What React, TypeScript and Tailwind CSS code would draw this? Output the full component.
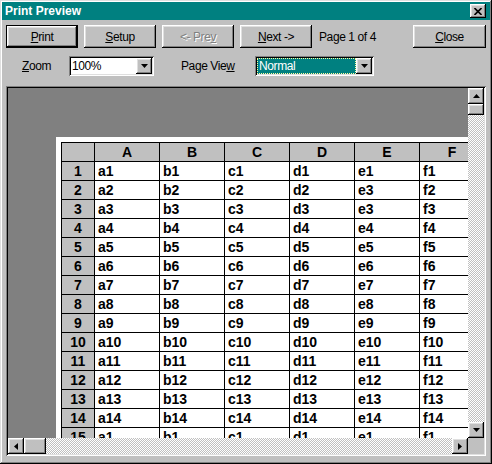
import React from 'react';

const raised =
  'bg-[#c0c0c0] shadow-[inset_-1px_-1px_0_#000,inset_1px_1px_0_#fff,inset_-2px_-2px_0_#808080,inset_2px_2px_0_#dfdfdf]';
const sunken =
  'shadow-[inset_1px_1px_0_#808080,inset_-1px_-1px_0_#fff,inset_2px_2px_0_#000,inset_-2px_-2px_0_#dfdfdf]';
const dither =
  'bg-[repeating-conic-gradient(#c0c0c0_0%_25%,#ffffff_0%_50%)] bg-[length:2px_2px]';

type Dir = 'up' | 'down' | 'left' | 'right';

const Arrow = ({ dir }: { dir: Dir }) => {
  const v = dir === 'up' || dir === 'down';
  const pts = {
    up: '3.5,0 7,4 0,4',
    down: '0,0 7,0 3.5,4',
    left: '4,0 4,7 0,3.5',
    right: '0,0 4,3.5 0,7',
  }[dir];
  return (
    <svg width={v ? 7 : 4} height={v ? 4 : 7} viewBox={v ? '0 0 7 4' : '0 0 4 7'}>
      <polygon points={pts} fill="#000" />
    </svg>
  );
};

const ScrollBtn = ({ dir }: { dir: Dir }) => (
  <div className={`${raised} w-[16px] h-[16px] shrink-0 flex items-center justify-center`}>
    <Arrow dir={dir} />
  </div>
);

const Btn = ({ children, isDefault, disabled, className = '' }: { children: React.ReactNode; isDefault?: boolean; disabled?: boolean; className?: string }) => (
  <div className={`h-[23px] ${isDefault ? 'border border-black' : ''} ${className}`}>
    <div
      className={`${raised} h-full w-full flex items-center justify-center ${
        disabled ? 'text-[#808080] [text-shadow:1px_1px_0_#fff]' : 'text-black'
      }`}
    >
      {children}
    </div>
  </div>
);

const Combo = ({ width, children }: { width: string; children: React.ReactNode }) => (
  <div className={`${sunken} ${width} h-[20px] bg-white p-[2px] flex items-stretch`}>
    <div className="flex-1 flex items-center min-w-0">{children}</div>
    <div className={`${raised} w-[16px] h-[16px] flex items-center justify-center`}>
      <Arrow dir="down" />
    </div>
  </div>
);

const cols = ['A', 'B', 'C', 'D', 'E', 'F'];
const rows = Array.from({ length: 15 }, (_, i) => {
  const n = i + 1;
  if (n === 15) return { label: 15, cells: cols.map((c) => `${c.toLowerCase()}1`) };
  return {
    label: n,
    cells: cols.map((c) => (n === 2 && c === 'E' ? 'e3' : `${c.toLowerCase()}${n}`)),
  };
});

export default function App() {
  return (
    <div
      className="w-[492px] h-[464px] bg-[#c0c0c0] p-[2px] flex flex-col text-[12px] tracking-[-0.4px] shadow-[inset_-1px_-1px_0_#000,inset_1px_1px_0_#dfdfdf,inset_-2px_-2px_0_#808080,inset_2px_2px_0_#fff]"
      style={{ fontFamily: '"Liberation Sans", Arial, sans-serif' }}
    >
      {/* title bar */}
      <div className="h-[18px] bg-[#008080] flex items-center pl-[3px] pr-[4px] shrink-0">
        <span className="text-white font-bold text-[12px] tracking-normal">Print Preview</span>
        <div className={`${raised} ml-auto w-[16px] h-[14px] flex items-center justify-center`}>
          <svg width="8" height="7" viewBox="0 0 8 7">
            <path d="M0.5 0 L7.5 7 M7.5 0 L0.5 7" stroke="#000" strokeWidth="1.6" />
          </svg>
        </div>
      </div>

      {/* buttons */}
      <div className="mt-[5px] pl-[4px] pr-[4px] flex items-center gap-[6px] shrink-0">
        <Btn isDefault className="w-[72px]">
          <span><u>P</u>rint</span>
        </Btn>
        <Btn className="w-[72px]">
          <span><u>S</u>etup</span>
        </Btn>
        <Btn disabled className="w-[72px]">
          <span>&lt;- Pre<u>v</u></span>
        </Btn>
        <Btn className="w-[72px]">
          <span><u>N</u>ext -&gt;</span>
        </Btn>
        <span className="ml-[1px]">Page 1 of 4</span>
        <Btn className="w-[73px] ml-auto">
          <span><u>C</u>lose</span>
        </Btn>
      </div>

      {/* zoom / page view */}
      <div className="mt-[8px] pl-[20px] flex items-center shrink-0">
        <span className="w-[47px]"><u>Z</u>oom</span>
        <Combo width="w-[85px]">
          <span className="pl-[1px]">100%</span>
        </Combo>
        <span className="ml-[27px] w-[74px]">Page Vie<u>w</u></span>
        <Combo width="w-[119px]">
          <div className="h-full w-full bg-[#008080] border border-dotted border-[#ffffa0] flex items-center pl-[1px] text-white">
            Normal
          </div>
        </Combo>
      </div>

      {/* preview */}
      <div className={`${sunken} mt-[10px] ml-[4px] w-[480px] h-[370px] p-[2px] shrink-0`}>
        <div className="grid grid-cols-[460px_16px] grid-rows-[350px_16px] w-full h-full">
          <div className="bg-[#808080] overflow-hidden pl-[48px] pt-[49px]">
            <div className="bg-white p-[5px] w-max tracking-normal">
              <div className="grid grid-cols-[33px_repeat(6,65px)] border-l border-t border-black font-bold text-[14px] leading-none text-black">
                <div className="h-[19px] bg-[#c0c0c0] border-r border-b border-black" />
                {cols.map((c) => (
                  <div key={c} className="h-[19px] bg-[#c0c0c0] border-r border-b border-black flex items-center justify-center">
                    {c}
                  </div>
                ))}
                {rows.map((r) => (
                  <React.Fragment key={r.label}>
                    <div className="h-[19px] bg-[#c0c0c0] border-r border-b border-black flex items-center justify-center">
                      {r.label}
                    </div>
                    {r.cells.map((v, i) => (
                      <div key={i} className="h-[19px] border-r border-b border-black flex items-center pl-[3px]">
                        {v}
                      </div>
                    ))}
                  </React.Fragment>
                ))}
              </div>
            </div>
          </div>

          {/* vertical scrollbar */}
          <div className={`${dither} flex flex-col`}>
            <ScrollBtn dir="up" />
            <div className={`${raised} w-[16px] h-[11px]`} />
            <div className="flex-1" />
            <ScrollBtn dir="down" />
          </div>

          {/* horizontal scrollbar */}
          <div className={`${dither} flex`}>
            <ScrollBtn dir="left" />
            <div className={`${raised} w-[22px] h-[16px]`} />
            <div className="flex-1" />
            <ScrollBtn dir="right" />
          </div>
          <div className="bg-[#c0c0c0]" />
        </div>
      </div>
    </div>
  );
}
